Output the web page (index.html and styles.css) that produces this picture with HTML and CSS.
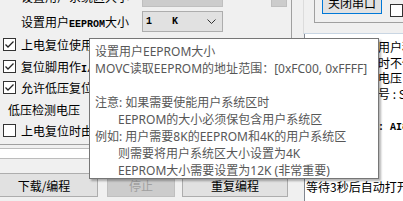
FILE: index.html
```html
<!DOCTYPE html>
<html>
<head>
<meta charset="utf-8">
<link rel="stylesheet" href="styles.css">
</head>
<body>
<div class="app">
  <div class="left">
    <div class="tab">
      <div class="row combo-row">
        <span class="label">设置用户系统区大小</span>
        <div class="combo disabled"></div>
        <div class="mini"></div>
      </div>
      <div class="row combo-row">
        <span class="label">设置用户<span class="a">EEPROM</span>大小</span>
        <div class="combo"><span class="a v1">1</span><span class="a v2">K</span><svg class="chev" width="9" height="5" viewBox="0 0 9 5"><polyline points="0.5,0.5 4.5,4.5 8.5,0.5" fill="none" stroke="#333" stroke-width="1"/></svg></div>
      </div>
      <div class="row chk-row"><span class="chk"><svg width="11" height="11" viewBox="0 0 11 11"><polyline points="1.5,5.5 4,8 9.5,2.5" fill="none" stroke="#222" stroke-width="1.3"/></svg></span><span class="label">上电复位使用较长延时</span></div>
      <div class="row chk-row"><span class="chk"><svg width="11" height="11" viewBox="0 0 11 11"><polyline points="1.5,5.5 4,8 9.5,2.5" fill="none" stroke="#222" stroke-width="1.3"/></svg></span><span class="label">复位脚用作<span class="a">I/O</span>口</span></div>
      <div class="row chk-row"><span class="chk"><svg width="11" height="11" viewBox="0 0 11 11"><polyline points="1.5,5.5 4,8 9.5,2.5" fill="none" stroke="#222" stroke-width="1.3"/></svg></span><span class="label">允许低压复位(禁止低压中断)</span></div>
      <div class="row chk-row"><span class="label">低压检测电压</span></div>
      <div class="row chk-row"><span class="chk"></span><span class="label">上电复位时由硬件自动启动看门狗</span></div>
    </div>
    <div class="progress"></div>
    <div class="buttons">
      <div class="btn b1">下载/编程</div>
      <div class="btn b2 off">停止</div>
      <div class="btn b3">重复编程</div>
    </div>
  </div>
  <div class="right">
    <div class="topframe">
      <div class="group">
        <div class="btn close">关闭串口</div>
        <span class="chk chk-r"></span>
      </div>
    </div>
    <div class="log">
      <div class="line">上电自动启动用户程序</div>
      <div class="line">内部上电复位时不使能看门狗</div>
      <div class="line">低压复位门槛电压 : 2.20 V</div>
      <div class="line">目标单片机型号 : STC8H</div>
      <div class="line">操作成功</div>
      <div class="line">当前固件版本<span class="a">: AI8051U</span></div>
      <div class="line">下载完成</div>
      <div class="line"></div>
      <div class="line"></div>
      <div class="line">等待3秒后自动打开串口</div>
    </div>
  </div>
</div>
<div class="tooltip">
  <div class="tl">设置用户EEPROM大小</div>
  <div class="tl">MOVC读取EEPROM的地址范围：[0xFC00, 0xFFFF]</div>
  <div class="tl"></div>
  <div class="tl">注意: 如果需要使能用户系统区时</div>
  <div class="tl in">EEPROM的大小必须保包含用户系统区</div>
  <div class="tl">例如: 用户需要8K的EEPROM和4K的用户系统区</div>
  <div class="tl in">则需要将用户系统区大小设置为4K</div>
  <div class="tl in">EEPROM大小需要设置为12K (非常重要)</div>
</div>
</body>
</html>
```

FILE: styles.css
```css
* { box-sizing: border-box; }
body {
  margin: 0;
  width: 403px;
  height: 201px;
  overflow: hidden;
  position: relative;
  background: #f0f0f0;
  font: 12px "Noto Sans CJK SC", sans-serif;
  color: #000;
}
.a { font: 10px "Liberation Mono", monospace; font-weight: bold; }
.app { display: flex; height: 201px; }
.left { width: 303px; flex: none; display: flex; flex-direction: column; }
.tab {
  width: 292px;
  height: 161px;
  margin-top: -16px;
  border-right: 1px solid #a0a0a0;
  border-bottom: 1px solid #a0a0a0;
  flex: none;
}
.row { display: flex; align-items: center; white-space: nowrap; }
.combo-row { height: 25px; padding-left: 21px; }
.combo-row .label { width: 121px; flex: none; }
.combo {
  width: 81px; height: 21px; flex: none;
  border: 1px solid #adadad;
  background: #e1e1e1;
  display: flex; align-items: center;
}
.combo.disabled { background: #cccccc; border-color: #bfbfbf; }
.combo .v1 { margin-left: 3px; }
.combo .v2 { margin-left: 20px; }
.chev { margin-left: auto; margin-right: 6px; }
.mini { width: 16px; height: 21px; margin-left: 48px; background: #cccccc; border: 1px solid #bfbfbf; }
.chk-row { height: 21.5px; padding-left: 3px; }
.chk {
  width: 13px; height: 13px; flex: none;
  border: 1px solid #333;
  background: #fff;
  display: flex; align-items: center; justify-content: center;
}
.chk-row .label { margin-left: 5px; }
.progress {
  height: 11px; width: 291px; margin-top: 3px;
  background: #fff; border: 1px solid #bcbcbc; border-left: none;
  flex: none;
}
.buttons { display: flex; height: 24px; margin-top: 14px; margin-left: -10px; flex: none; }
.btn {
  height: 24px;
  border: 1px solid #adadad;
  background: #e1e1e1;
  display: flex; align-items: center; justify-content: center;
  white-space: nowrap;
}
.b1 { width: 108px; }
.b2 { width: 68px; margin-left: 9px; }
.b3 { width: 106px; margin-left: 7px; }
.off { background: #cccccc; border-color: #bfbfbf; color: #a0a0a0; }
.right { flex: 1; display: flex; flex-direction: column; min-width: 0; }
.topframe {
  height: 34px; flex: none;
  border-left: 1px solid #dcdcdc;
  border-bottom: 1px solid #c9d6e3;
}
.group {
  margin-left: 10px; height: 23px;
  border-left: 1px solid #a0a0a0;
  border-bottom: 1px solid #a0a0a0;
  display: flex; align-items: flex-start;
}
.close { width: 60px; margin-left: 7px; margin-top: -10px; border-color: #0078d7; }
.chk-r { margin-left: 8px; margin-top: 4px; }
.log {
  flex: 1;
  margin-left: 1px;
  background: #fff;
  border-left: 1px solid #828790;
  padding: 5px 0 0 1px;
  white-space: nowrap;
  overflow: hidden;
}
.line { height: 15.5px; line-height: 15.5px; }
.tooltip {
  position: absolute;
  left: 89px; top: 38px;
  width: 290px; height: 141px;
  background: #fff;
  border: 1px solid #767676;
  box-shadow: 2px 2px 2px rgba(0,0,0,0.3);
  color: #575757;
  font: 12px "Noto Sans", "Noto Sans CJK SC", sans-serif;
  padding: 4px 0 0 5px;
  white-space: nowrap;
}
.tl { height: 17px; line-height: 17px; }
.tl.in { padding-left: 23px; }
```
